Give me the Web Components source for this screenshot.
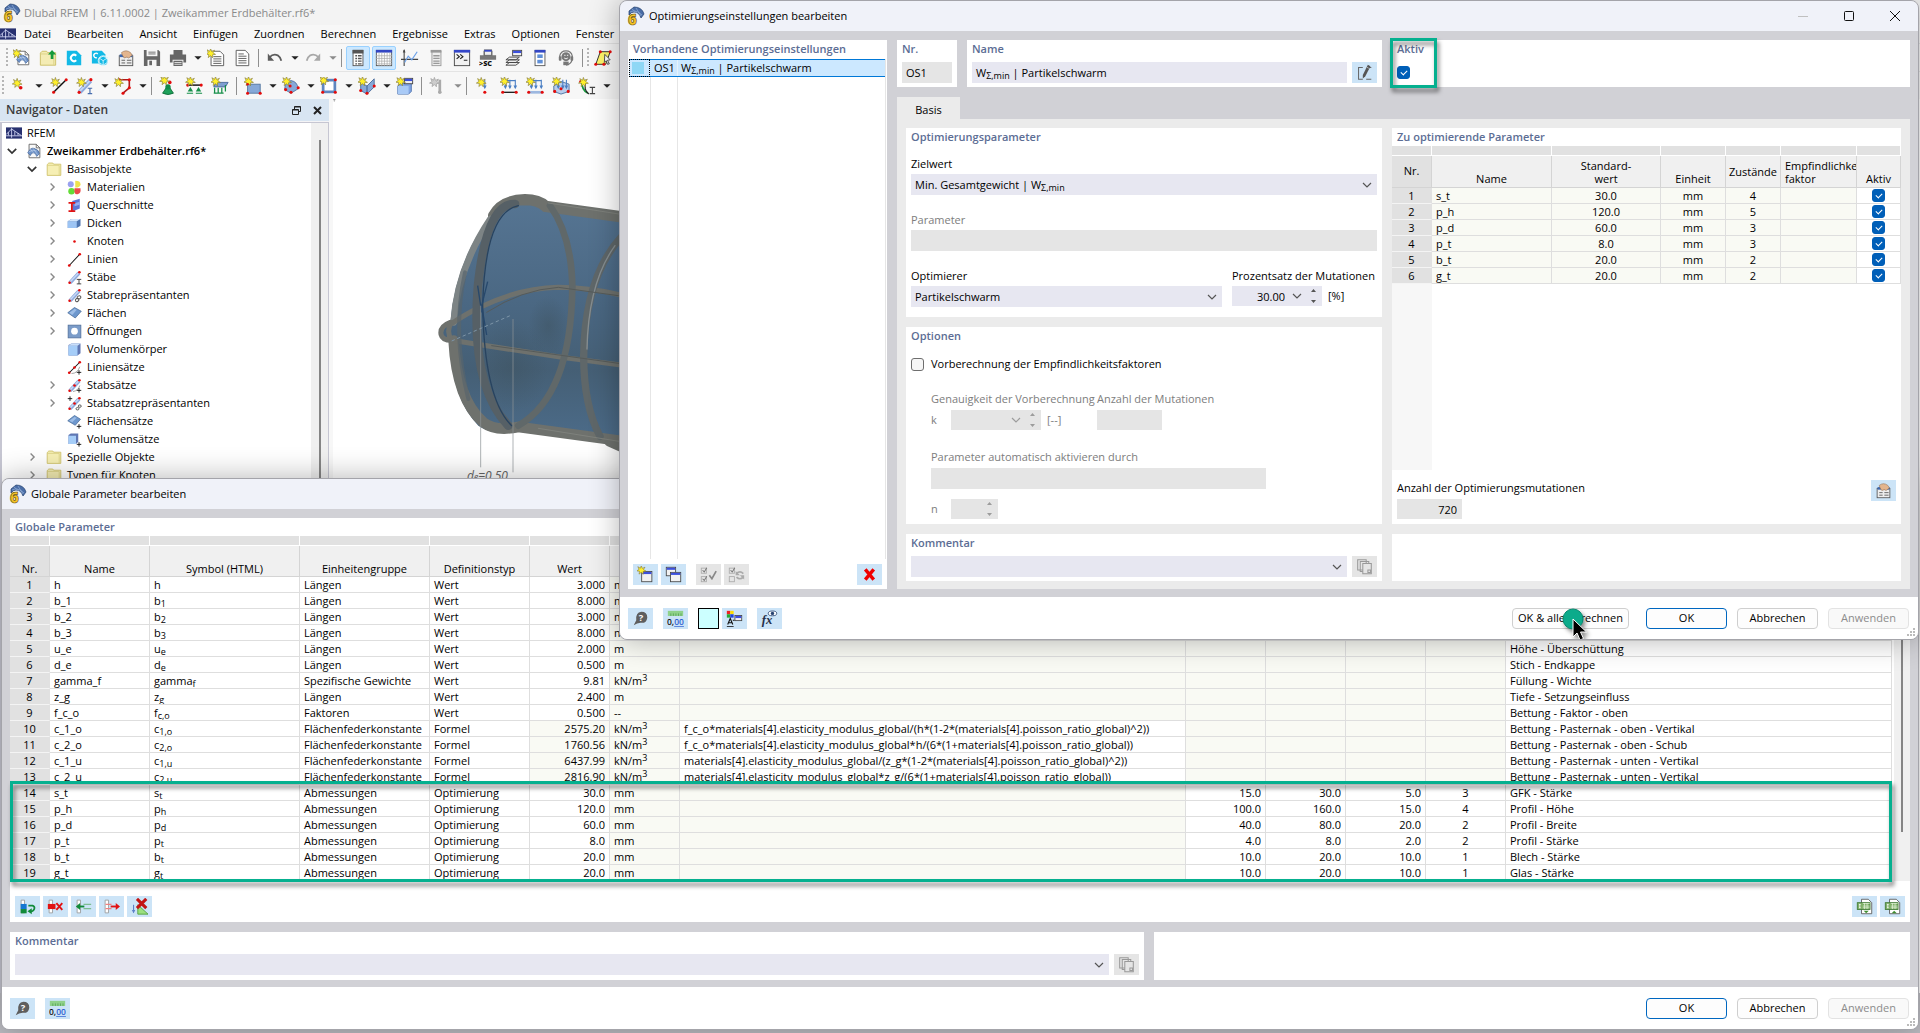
<!DOCTYPE html>
<html lang="de">
<head>
<meta charset="utf-8">
<title>Dlubal RFEM</title>
<style>
html,body{margin:0;height:100%;overflow:hidden}
body{font:11px/16px "Open Sans","Noto Sans",sans-serif;color:#000;background:#cfcfd6}
</style>
</head>
<body>
<rf-app></rf-app>
<script>
const STAR='M0-5.5 1.2-2.2 4.4-3.6 2.6-.8 5.5 1 2.2 1.4 2.2 4.8 0 2.4-2.6 4.6-2 1.2-5.4.8-2.6-1-4-4.2-1-2.4Z';
const star=(x,y)=>`<path transform="translate(${x} ${y})" d="${STAR}" fill="#fff02a" stroke="#857a3c" stroke-width=".7"/>`;
const dot=(x,y,r=1.7)=>`<circle cx="${x}" cy="${y}" r="${r}" fill="#e30b0b"/>`;
const line=(d,c='#222',w=1.4)=>`<path d="${d}" fill="none" stroke="${c}" stroke-width="${w}"/>`;
const shape=(d,f,s='none')=>`<path d="${d}" fill="${f}" stroke="${s}"/>`;
const plus=line('M13 16.5h6M16 13.5v6','#111',1.2);
const memberBar=line('M4 17 16 4','#8ea9dc',5)+line('M4 16 15.5 4','#c6d8f6',2)+dot(3.5,17,1.8)+dot(16.5,3,1.8);
const fold='<path d="M4.500 2.500h8l4 4v11h-12z" fill="#fff" stroke="#666"/><path d="M12.500 2.500v4h4" fill="none" stroke="#666"/>';
const mesh='<path d="M3 12q3-6 7-5 6 2 6 6l-3 3q-1-4-4-4-2 0-3 3z" fill="#6f93c8" stroke="#3d5f96" stroke-width=".7"/><path d="M6 8l5 6M4 11q5-3 9-1M9 7l5 7" stroke="#dce8f8" stroke-width=".5" fill="none"/>';
const folder='<path d="M1.500 4.500l2-2h5l1 1.500h9v14h-17z" fill="#f6efb4" stroke="#cbbd62"/><path d="M1.500 5.500h15v12" fill="none" stroke="#d9cf83"/>';
const win=(x,y,w,h)=>`<rect x="${x+.5}" y="${y+.5}" width="${w}" height="${h}" fill="#f1f1f1" stroke="#444"/><rect x="${x+1}" y="${y+1}" width="${w-1}" height="2.500" fill="#3c50dd"/>`;
const down=(x)=>line(`M${x} 3v9`,'#4a7fc4',1.2)+shape(`M${x-2} 9.500h4l-2 4z`,'#4a7fc4');
const rows=(x)=>`<path d="M2.500 2.500h4v15h-4z" fill="#fff" stroke="#999"/>`;
const xls='<path d="M6.500 1.500h8l4 4v13h-12z" fill="#fff" stroke="#555"/><rect x="1.500" y="5.500" width="15" height="8" fill="#7fb069" stroke="#3f7a34"/><path d="M3.500 7.500h2m-1 0v4m-1 0h2" stroke="#fff" fill="none"/><path d="M8 6.500h8M8 9.500h8M8 11.500h8M10 6v7M13 6v7" stroke="#e7f4df" stroke-width=".8" fill="none"/>';
const ICONS={
 logo:'<path d="M4 5 9 1q8 0 10 7l-3 4q-2-6-7-6-3 0-5 3z" fill="#4a6da7" stroke="#1f3d6d" stroke-width=".7"/><path d="M7 3l6 5M11 2l5 8M5 6q6-3 12 3" stroke="#9eb8df" stroke-width=".6" fill="none"/><text x="3" y="18.500" font-size="15" font-weight="800" fill="#f7c325" stroke="#6d5a17" stroke-width=".7" font-family="Open Sans">6</text>',
 rfem:'<rect x="0" y="3" width="20" height="14" fill="#27306f"/><path d="M0 13.500h20M7 4v12M0 12 7 5l12 8M3 9v4M11 8v5M15 10v3" fill="none" stroke="#dfe5ff" stroke-width="1"/>',
 file:fold.replace('#fff','#f9f9f9')+mesh, newmodel:'<g transform="translate(1)">'+fold+mesh+'</g>'+star(4,5),
 folder, open:folder.replaceAll('#f6efb4','#f4ecb4')+shape('M14.500 1 19 6h-3v5h-3V6h-3z','#159a3c'),
 cdoc:'<path d="M2 2h11l5 5v11H2z" fill="#13b9e6"/><path d="M12.500 12.500a3.500 3.500 0 1 1 0-5" fill="none" stroke="#fff" stroke-width="2.200"/>',
 cloud:'<path d="M1 2h11l4 4v10H1z" fill="#13b9e6"/><path d="M7.500 5.500a2.500 2.500 0 1 0-1 4" fill="none" stroke="#fff" stroke-width="1.500"/><circle cx="13.500" cy="13" r="5.500" fill="#13b9e6" stroke="#fff" stroke-width=".8"/><path d="M9 10l4.500-2L18 10v5l-4.500 3L9 15zM9 10l4.500 3 4.500-3M13.500 13v5" fill="none" stroke="#fff" stroke-width=".8"/>',
 hand:'<rect x="2.500" y="7.500" width="15" height="11" fill="#eee" stroke="#555"/><rect x="3" y="6" width="14" height="3" fill="#3b66b0"/><path d="M5 4q5-4 10 0l2 3-4 3-2-1-3 1-2-3z" fill="#e3b58e" stroke="#8b6547" stroke-width=".6"/><path d="M5 12.500h4M11 12.500h5M5 15.500h4M11 15.500h5" stroke="#555"/>',
 save:'<path d="M1 1h16l2 2v16H1z" fill="#666"/><rect x="4" y="1" width="12" height="7" fill="#f5f5f5"/><path d="M6 3.500h8M6 5.500h8" stroke="#666"/><rect x="5" y="12" width="10" height="7" fill="#f5f5f5"/><rect x="7" y="13" width="3" height="5" fill="#666"/>',
 print:'<path d="M5 1h10v5H5zM1 6h18v9h-3v-3H4v3H1zM5 13h10v6H5z" fill="#666"/><path d="M6 15h8M6 17h8" stroke="#f4f4f4" stroke-width=".9"/>',
 report:'<path d="M4.500 2.500h10l4 4v12h-14z" fill="#fff" stroke="#555"/><path d="M7 8.500h9M7 11h9M7 13.500h9M7 16h9" stroke="#555"/>'+star(4,5),
 page:'<path d="M3.500 1.500h10l4 4v13h-14z" fill="#fff" stroke="#555"/><path d="M6 5.500h6M6 8h9M6 10.500h9M6 13h9M6 15.500h9" stroke="#555"/>',
 undo:line('M4 9q4-4 9-2 3 2 4 6','#5c5c5c',2)+shape('M2 5v8h7z','#5c5c5c'),
 redo:line('M16 9q-4-4-9-2-3 2-4 6','#a8a8a8',2)+shape('M18 5v8h-7z','#a8a8a8'),
 nav:'<rect x="4.500" y="1.500" width="11" height="17" fill="#fff" stroke="#555"/><rect x="4" y="1" width="12" height="4" fill="#555"/><path d="M7 7.500h2m1 0h4M7 10.500h2m1 0h4M7 13.500h2m1 0h4M7 16.500h2m1 0h4" stroke="#555" stroke-width="1.500"/>',
 grid:'<rect x="1.500" y="1.500" width="17" height="17" fill="#fff" stroke="#555"/><rect x="1" y="1" width="18" height="3" fill="#3346c4"/><path d="M1 7.500h18M1 10.500h18M1 13.500h18M1 16.500h18M4.500 4v15M7.500 4v15M10.500 4v15M13.500 4v15M16.500 4v15" stroke="#aaa" stroke-width=".8"/>',
 graph:line('M3.500 1v18M0 11.500h19','#444',1.2)+line('M4 15 8 8l4 4 6-9','#6ba0e8',1.3)+shape('M2 4l1.500-4L5 4z','#444'),
 list2:'<rect x="5.500" y="2.500" width="10" height="16" fill="#eee" stroke="#999"/><rect x="4" y="1" width="12" height="3" fill="#999"/><path d="M7 7.500h7M7 10.500h7M7 13.500h7M7 16h7" stroke="#999" stroke-width="1.400"/>',
 console:'<rect x="1.500" y="1.500" width="17" height="17" fill="#f2f2f2" stroke="#444"/><rect x="1" y="1" width="18" height="3" fill="#3446c8"/><path d="M4 6l3 2.500L4 11M8 6l3 2.500L8 11M12 12.500h4" fill="none" stroke="#222" stroke-width="1.300"/>',
 sc:'<path d="M5 2h10v5h4v5H1V7h4z" fill="#777"/><rect x="6" y="1" width="8" height="6" fill="#eee" stroke="#666"/><rect x="6" y="1" width="8" height="2" fill="#3446c8"/><text x="0" y="19" font-size="8" font-weight="800" font-family="Open Sans" fill="#111">&gt;SC</text>',
 layers:win(8,1,10,6)+'<path d="M1 12l4-3h11l-4 3z M1 15l4-3h11l-4 3zM1 18l4-3h11l-4 3z" fill="#eee" stroke="#444"/>',
 blocks:'<rect x="4.500" y="1.500" width="11" height="17" fill="#fff" stroke="#555"/><rect x="4" y="1" width="12" height="3" fill="#3346c4"/><rect x="7" y="6" width="6" height="4" fill="#5f8fd8"/><rect x="7" y="12" width="6" height="4" fill="#5f8fd8"/>',
 head:'<circle cx="10" cy="8.500" r="5" fill="#777"/><path d="M3 11V8q1-6 7-6t7 6v3q-1 6-7 7" fill="none" stroke="#777" stroke-width="1.300"/><rect x="2" y="8" width="3" height="5" rx="1" fill="#777"/><rect x="15" y="8" width="3" height="5" rx="1" fill="#777"/><path d="M8 7h1.500M11 7h1.500M8 10q2 2 4 0" stroke="#fff" fill="none"/><path d="M7 14h6v4H7z" fill="#777"/>',
 plane:'<path d="M7 3h11l-5 14H2z" fill="#fff56a" stroke="#222"/>'+dot(7,3)+dot(18,3)+dot(2,17)+dot(11,17)+shape('M12 6l6 6-3 .5 2 4-2 .5-1.500-4-2 2z','#fff','#444'),
 nstar:star(9,7)+dot(13,12,2), lnew:line('M4 17 18 3','#111',1.6)+dot(4,17)+dot(18,3)+star(6,6),
 mnew:memberBar+line('M13 12.500h5M15.500 12.500v6M13 18.500h5','#4a6fae',1.3)+star(6,6),
 poly:line('M6 3h11v9l-7 6','#b01818',1.8)+dot(6,3)+dot(17,3)+dot(17,12)+dot(10,18)+star(5,6),
 support:shape('M10 9l6 9q-6 3-12 0z','#1fa15a','#0c6b37')+'<circle cx="10" cy="11" r="3" fill="#128a48"/>'+dot(12,6,2)+star(6,4),
 msupport:line('M3 9h15','#111',1.6)+dot(3,9)+dot(18,9)+shape('M6 11l3 5H3zM15 11l3 5h-6z','#158f48')+line('M2 18h7M12 18h7','#158f48',1.2)+star(6,5),
 ssupport:shape('M6 6h13l-3 5H3z','#7f9fd0','#47689c')+line('M4 12v6M8 12v6M12 12v6M16 9v7M3 18h11','#158f48',1.4)+star(5,5),
 rect:'<rect x="4" y="8" width="14" height="10" fill="#86a8d8" stroke="#54759f"/>'+dot(4,18)+dot(18,18)+star(5,5)+dot(4,8,1.4),
 quad:'<path d="M3 14Q3 5 10 4q7 1 8 9l-8 5z" fill="#86a8d8" stroke="#54759f"/>'+dot(18,12)+dot(10,17)+dot(4,14)+dot(9,10)+star(5,5),
 opening:'<rect x="3.500" y="3.500" width="13" height="13" fill="#fff" stroke="#5f86c0" stroke-width="3"/>'+dot(3,3)+dot(17,3)+dot(3,17)+dot(17,17)+star(4,4),
 book:shape('M3 6l7 4 8-8v9l-8 8-7-4z','#86a8d8','#4b6c9c')+line('M10 10v9','#4b6c9c')+dot(10,18)+dot(18,10)+dot(3,15)+star(5,5),
 solid:shape('M2 10l3-3h12v9l-3 3H2z','#82a7e6','#4c6faa')+shape('M2 10h12v9H2z','#a9caf6')+win(9,1,9,6)+star(5,5),
 gray:line('M12 3v14','#aaa',3)+'<circle cx="12" cy="17" r="2" fill="#aaa"/><path transform="translate(6 6)" d="'+STAR+'" fill="#ccc" stroke="#aaa"/>',
 load1:down(12)+dot(12,17)+star(8,6), load2:down(6)+down(11)+down(17)+line('M5 4h12','#4a7fc4')+line('M3 17h15','#111')+dot(3,17)+dot(18,17)+star(5,5),
 load3:down(6)+down(11)+down(17)+line('M5 4h12','#4a7fc4')+line('M3 17h15','#9db8e0',3)+dot(3,17)+dot(18,17)+star(5,5),
 load4:shape('M2 10l8-5 9 3v8l-9 3-8-3z','#b8cdec','#4a6f9f')+down(7)+down(12)+down(16)+dot(3,16)+dot(10,13)+dot(18,16)+star(5,5),
 mem2:line('M4 4q0 11 7 14','#159a3c',2)+line('M8 3v10q1 4 4 6','#222',1.3)+line('M13 11.500h6M16 11.500v7M13 18.500h6','#444',1.2)+dot(3,5)+star(6,6),
 mat:'<circle cx="5" cy="5.500" r="4" fill="#99a1ef"/><path d="M11 1q7 0 7 4.500T11 10z" fill="#eee24c"/><circle cx="6" cy="15" r="4.300" fill="#63dc36"/><path d="M10 11h8q1 7-4 8t-4-8z" fill="#ec4a4a"/>',
 section:shape('M7 4l10-3v13L7 18z','#5d76d6')+shape('M10 7l7-2v4l-7 2z','#98aef2')+line('M2 6.500h9M6.500 6v11M2 17.500h9','#e01414',2.4),
 thick:shape('M1 7l5-3h12v9l-5 3H1z','#4e75b0')+shape('M1 7h12v9H1z','#9cc4f4')+shape('M1 7l5-3h12l-5 3z','#d0e4fb'),
 node:dot(10,10,1.7), line:line('M3 18 17 3','#111',1.4)+dot(3,18,1.8)+dot(17,3,1.8),
 member:memberBar+line('M13 12.500h6M16 12.500v6M13 18.500h6','#333',1.2),
 memrep:memberBar+'<g fill="none" stroke="#555" stroke-width="1.300"><ellipse cx="16" cy="12.500" rx="2.500" ry="2" transform="rotate(-35 16 12.500)"/><ellipse cx="13.500" cy="16" rx="2.500" ry="2" transform="rotate(-35 13.500 16)"/></g>',
 surface:shape('M1 9l9-7 9 5-8 9z','#6d97cd','#4a6c9a')+shape('M3 9l7-5 3 1-6 7z','#9dbde6'),
 hole:'<rect x="1.500" y="1.500" width="17" height="17" fill="#7b9cc9" stroke="#4e6d98"/><circle cx="10" cy="9.500" r="4.500" fill="#fff"/>',
 cube:shape('M2 4l4-2h12v13l-4 3H2z','#6078b4')+shape('M2 5h12v13H2z','#a5cdf8')+shape('M2 5l4-3h12l-4 3z','#c9e0fb'),
 lineset:line('M3 17 17 3','#111',1.4)+line('M6 18q8 0 11-9','#888',1)+dot(3,17,1.8)+dot(10,10,1.8)+dot(17,3,1.8)+plus,
 memset:memberBar+line('M8 18q7-1 9-8','#888',1)+dot(10,10,1.800)+plus,
 memsetrep:memberBar+line('M1 3.500h6M4 .5v6','#111',1.2)+dot(10,10,1.8)+'<g fill="none" stroke="#555" stroke-width="1.300"><ellipse cx="17" cy="13.500" rx="2" ry="1.600"/><ellipse cx="14" cy="17" rx="2" ry="1.600"/></g>',
 surfset:shape('M1 9l9-7 8 5-7 8z','#6d97cd','#4a6c9a')+shape('M3 9l7-5 3 1-6 6z','#9dbde6')+plus,
 cubeset:shape('M2 4l3-2h10v11l-3 3H2z','#6078b4')+shape('M2 5h10v11H2z','#a5cdf8')+plus,
 chev:line('M5 7.500l5 5 5-5','#555',1.5), chevR:line('M8 5l5 5-5 5','#8a8a8a',2), chevD:line('M4 7l6 6 6-6','#333',2.4),
 caret:shape('M4 7h12l-6 6z','#222'),
 newwin:win(5,6,12,12)+star(5,5), copywin:win(1,1,11,10)+win(6,7,12,11),
 checks:'<rect x="1.500" y="2.500" width="6" height="6" fill="none" stroke="#aaa"/><rect x="1.500" y="12.500" width="6" height="6" fill="none" stroke="#aaa"/>'+line('M3 5l2 2 3-5M3 15l2 2 3-5','#777',1.2)+line('M11 11l3 4 5-9','#888',2),
 swap:'<rect x="1.500" y="2.500" width="6" height="6" fill="none" stroke="#aaa"/><rect x="1.500" y="12.500" width="6" height="6" fill="none" stroke="#aaa"/>'+line('M3 5l2 2 3-5','#777',1.2)+line('M10 9q4-4 8 0M18 13q-4 4-8 0','#aaa',2)+shape('M9 6v5h5zM19 16v-5h-5z','#aaa'),
 redx:line('M5 4l10 12M15 4 5 16','#f00000',4),
 edit:line('M8 4H3v14h5M12 18h6M15 4h3','#666',1.2)+shape('M14 1l3 1.500-6 12-3 2.500 0-4z','#555')+line('M13 4l2 1','#eee',.8),
 help:'<path d="M2 18l3-6q-1-9 6-10 7 0 7 7-1 7-8 6-4 0-8 3z" fill="#5e5e5e"/><text x="8" y="13" font-size="11" font-weight="700" fill="#fff" font-family="Open Sans">?</text>',
 units:'<rect x="1" y="1" width="18" height="6" fill="#8fd18a"/><path d="M4.500 4v3M7.500 4v3M10.500 4v3M13.500 4v3M16.500 4v3" stroke="#3f8f42" stroke-width=".7"/><text x="0" y="18" font-size="10" font-weight="600" font-family="Open Sans" fill="#111">0,<tspan fill="#2f5fd0" text-decoration="underline">00</tspan></text>',
 disp:'<rect x="1" y="1" width="4" height="4" fill="#e22"/><rect x="5" y="1" width="4" height="4" fill="#fd0"/><rect x="1" y="5" width="4" height="4" fill="#2a3"/><rect x="5" y="5" width="4" height="4" fill="#24d"/>'+win(10,6,8,6)+line('M2 17l3-7 3 7M3.500 15h3M8 12h2','#111',1.3)+line('M1 19.500h8','#111',1),
 fx:'<text x="1" y="16" font-size="15" font-style="italic" font-weight="700" font-family="Liberation Serif" fill="#25304a">fx</text><ellipse cx="13.500" cy="4" rx="5" ry="2.800" fill="#fff" stroke="#25406f"/><circle cx="13.500" cy="4" r="2" fill="#25406f"/>',
 pages:'<g fill="#e5e5e5" stroke="#999" stroke-width="1.200"><path d="M2 2h10v12H2zM5 4h10v12H5z"/><path d="M8 6.500h10v12H8z"/><path d="M14 14h3v3h-3z"/></g>',
 r1:rows()+'<rect x="2" y="7" width="7" height="6" fill="#1677d2"/><rect x="2" y="13" width="7" height="5" fill="#118a3a"/>'+line('M11 9h5q3 1 2 4t-5 3','#118a3a',2)+shape('M15 12v7l-5-3.500z','#118a3a'),
 r2:rows()+'<rect x="1" y="7" width="9" height="6" fill="#e21313"/>'+line('M11 6l7 8M18 6l-7 8','#e21313',2.2),
 r3:rows()+line('M3 10h8','#118a3a',2.2)+shape('M1 10l5-4v8z','#118a3a')+line('M10 7.500h9M10 12.500h9','#7dbd91',1.2),
 r4:rows()+line('M3 7.500h7M3 12.500h7','#f08080',1.2)+line('M9 10h7','#e21313',2.2)+shape('M20 10l-5-4v8z','#e21313'),
 r5:shape('M8 8l12 11H8z','#9be07f','#4e9d3a')+line('M3 8v9','#5b80c8',1.3)+shape('M1 14h4l-2 4z','#5b80c8')+line('M7 1l11 11M18 1 7 12','#c21414',3.6),
 xls1:xls+shape('M9 15h6l-3 3z','#3f8f32'), xls2:xls+shape('M9 18h6l-3-3z','#3f8f32')
};
const svg=(n,s=20)=>`<svg viewBox="0 0 20 20" width="${s}" height="${s}" aria-hidden="true">${ICONS[n]||''}</svg>`;

function define(name,css,html,extra){
  customElements.define(name,class extends HTMLElement{
    constructor(){super();this.attachShadow({mode:'open'});}
    connectedCallback(){
      const t=document.createElement('template');
      t.innerHTML=`<style>*{box-sizing:border-box}svg{display:block;flex:none}${css}</style>`+(typeof html==='function'?html(this):html);
      this.shadowRoot.replaceChildren(t.content.cloneNode(true));
      if(extra)extra(this);
    }
  });
}
const rich='W<sub>Σ,min</sub>';
const SUB='sub,sup{font-size:9px;line-height:0;vertical-align:-2px}sup{vertical-align:4px}';

define('rf-icon',':host{display:block;flex:none}',h=>svg(h.getAttribute('name'),+(h.getAttribute('size')||16)));

define('rf-tool',`:host{display:block;flex:none}
button{width:25px;height:21px;border:0;padding:0;background:#cce4f7;display:flex;align-items:center;justify-content:center}
button:disabled{background:#e5e5e5}`,
h=>`<button type="button" aria-label="${h.getAttribute('label')||h.getAttribute('name')}" ${h.hasAttribute('disabled')?'disabled':''}>${svg(h.getAttribute('name'),17)}</button>`);

define('rf-button',`:host{display:block;flex:none}
button{font:inherit;color:#000;height:21px;width:81px;padding:0;border:1px solid #cfcfcf;border-radius:4px;background:#fdfdfd;white-space:nowrap}
:host([primary]) button{border-color:#0067c0}
:host([wide]) button{width:117px}
button:disabled{color:#8c8c8c;background:#f9f9f9;border-color:#e3e3e3}`,
h=>`<button type="button" ${h.hasAttribute('disabled')?'disabled':''}><slot></slot></button>`);

define('rf-panel',`:host{display:flex;flex-direction:column;background:#fff;min-width:0}
h2{margin:0;font-size:11px;font-weight:600;line-height:18px;height:18px;padding:0 5px;color:#5c6d94;white-space:nowrap}`,
h=>`<h2>${h.getAttribute('heading')||''}</h2><slot></slot>`);

define('rf-window',`:host{display:flex;flex-direction:column;background:#d1d1d6;border:1px solid #a4a4aa;border-radius:8px;overflow:hidden;box-shadow:0 0 30px rgba(0,0,0,.3)}
header{display:flex;align-items:center;flex:none;height:30px;padding-left:5px;background:#f0f2f9;gap:4px}
h1{font-size:11px;font-weight:400;margin:0;flex:1}
.ctl{display:flex}.ctl button{width:46px;height:28px;border:0;background:none;padding:0;display:grid;place-items:center}
.body{flex:1;display:flex;flex-direction:column;min-height:0;padding:9px 8px 8px}
footer{flex:none;height:42px;background:#fff;display:flex;align-items:center;gap:10px;padding:0 9px 0 8px}
.grip{position:absolute;right:2px;bottom:2px}`,
h=>`<header>${svg('logo',20)}<h1>${h.getAttribute('caption')}</h1>${h.hasAttribute('controls')?`<div class="ctl">
<button type="button" aria-label="Minimieren"><svg width="10" height="10"><path d="M0 5.500h10" stroke="#c0c0c0"/></svg></button>
<button type="button" aria-label="Maximieren"><svg width="10" height="10"><rect x=".5" y=".5" width="9" height="9" rx="1" fill="none" stroke="#111"/></svg></button>
<button type="button" aria-label="Schließen"><svg width="10" height="10"><path d="M0 0l10 10M10 0 0 10" stroke="#111"/></svg></button></div>`:''}</header>
<div class="body"><slot></slot></div><footer><slot name="footer"></slot></footer>
<svg class="grip" width="9" height="9" fill="#bbb"><path d="M6 0h2v2H6zM6 3h2v2H6zM3 3h2v2H3zM6 6h2v2H6zM3 6h2v2H3zM0 6h2v2H0z"/></svg>`);

/* labelled field: kind = select | text | spin */
define('rf-field',`:host{display:flex;flex-direction:column;gap:2px;min-width:0}
label{line-height:16px;white-space:nowrap}:host([disabled]) label,:host([disabled]) .unit{color:#7d7d7d}
:host([inline]){flex-direction:row;align-items:center;gap:0}:host([inline]) label{width:20px}
.row{display:flex;align-items:center;gap:6px}
.box{position:relative;flex:1;height:21px;background:#e7e7f1;display:flex;align-items:center;min-width:0}
:host([disabled]) .box,:host([readonly]) .box{background:#e5e5e5}
input,select{appearance:none;font:inherit;color:inherit;border:0;margin:0;background:none;width:100%;height:100%;padding:0 8px 0 4px;outline:0}
:host([small]) .box{flex:none;width:var(--w,90px);height:20px}
:host([spin]) input{text-align:right;padding-right:4px}
.rich{position:absolute;left:4px;pointer-events:none;white-space:nowrap}
.chev{position:absolute;right:2px;pointer-events:none}
:host([spin]) .box .chev{position:static;margin-right:1px}
:host([disabled]) svg{opacity:.5}
.ud{margin:0 5px 0 4px}${SUB}`,
h=>{
 const lab=h.getAttribute('label'),v=h.getAttribute('value')||'',dis=h.hasAttribute('disabled')?'disabled':'',ro=h.hasAttribute('readonly')?'readonly':'';
 const sel=h.hasAttribute('select'),aria=lab?'':`aria-label="${h.getAttribute('name')||'Wert'}"`;
 const r=h.hasAttribute('rich')?`<span class="rich">${h.getAttribute('rich').replace('{W}',rich)}</span>`:'';
 const ctl=sel?`<select id="c" ${aria} ${dis}><option>${v}</option></select>`:`<input id="c" type="text" ${aria} value="${v}" ${dis} ${ro}>`;
 const ch=h.hasAttribute('chev')||(sel&&!h.hasAttribute('nochev'))?`<span class="chev">${svg('chev',16)}</span>`:'';
 const ud=h.hasAttribute('spin')?`<svg class="ud" width="7" height="16" fill="#555"><path d="M1 4h5L3.500 1zM1 12h5l-2.500 3z"/></svg>`:'';
 return `${lab?`<label for="c">${lab}</label>`:''}<div class="row" style="${h.hasAttribute('inline')?'':'width:100%'}"><div class="box">${ctl}${r}${ch}${ud}</div>${h.hasAttribute('unit')?`<span class="unit">${h.getAttribute('unit')}</span>`:''}</div>`;
});

const CHECK=`input[type=checkbox]{appearance:none;flex:none;margin:0;width:13px;height:13px;border:1px solid #6e6e6e;border-radius:3px;background:#f6f6f6;display:block;position:relative}
input[type=checkbox]:checked{background:#005fb8;border-color:#005fb8}
input[type=checkbox]:checked::before{content:"";position:absolute;left:3px;top:3px;width:5px;height:3px;border-left:1px solid #fff;border-bottom:1px solid #fff;transform:rotate(-45deg)}`;
define('rf-check',`:host{display:block}label{display:flex;align-items:center;gap:7px;line-height:18px}${CHECK}`,
h=>`<label><input type="checkbox" ${h.hasAttribute('checked')?'checked':''} aria-label="${h.getAttribute('name')||h.textContent}"><slot></slot></label>`);

const TABLE=`table{border-collapse:separate;border-spacing:0;table-layout:fixed;width:100%;white-space:nowrap}
th{font-weight:400}
.strip th{height:10px;padding:0;background:#e1e1e1;border-right:1px solid #fff;border-bottom:1px solid #fff;font-size:0;line-height:0}
.head th{height:31px;padding:0 4px 1px;background:#f0f0f0;border-right:1px solid #d4d4d4;border-bottom:1px solid #d4d4d4;vertical-align:bottom;line-height:13px;overflow:hidden}
.head th:first-child{background:#e1e1e1}
td,tbody th{height:16px;line-height:15px;padding:0 4px;border-right:1px solid #dedede;border-bottom:1px solid #dedede;overflow:hidden;background:#fff}
tbody th{background:#e1e1e1;border-color:#e1e1e1;border-bottom-color:#f4f4f4;text-align:center}
.ro{background:#f9faf4}.r{text-align:right}.c{text-align:center}`;

const L='Längen',G=[
['h','h',L,'Wert','3.000','m','','','','','',''],
['b_1','b<sub>1</sub>',L,'Wert','8.000','m','','','','','',''],
['b_2','b<sub>2</sub>',L,'Wert','3.000','m','','','','','',''],
['b_3','b<sub>3</sub>',L,'Wert','8.000','m','','','','','',''],
['u_e','u<sub>e</sub>',L,'Wert','2.000','m','','','','','','Höhe - Überschüttung'],
['d_e','d<sub>e</sub>',L,'Wert','0.500','m','','','','','','Stich - Endkappe'],
['gamma_f','gamma<sub>f</sub>','Spezifische Gewichte','Wert','9.81','kN/m<sup>3</sup>','','','','','','Füllung - Wichte'],
['z_g','z<sub>g</sub>',L,'Wert','2.400','m','','','','','','Tiefe - Setzungseinfluss'],
['f_c_o','f<sub>c,o</sub>','Faktoren','Wert','0.500','--','','','','','','Bettung - Faktor - oben'],
['c_1_o','c<sub>1,o</sub>','Flächenfederkonstante','Formel','2575.20','kN/m<sup>3</sup>','f_c_o*materials[4].elasticity_modulus_global/(h*(1-2*(materials[4].poisson_ratio_global)^2))','','','','','Bettung - Pasternak - oben - Vertikal'],
['c_2_o','c<sub>2,o</sub>','Flächenfederkonstante','Formel','1760.56','kN/m<sup>3</sup>','f_c_o*materials[4].elasticity_modulus_global*h/(6*(1+materials[4].poisson_ratio_global))','','','','','Bettung - Pasternak - oben - Schub'],
['c_1_u','c<sub>1,u</sub>','Flächenfederkonstante','Formel','6437.99','kN/m<sup>3</sup>','materials[4].elasticity_modulus_global/(z_g*(1-2*(materials[4].poisson_ratio_global)^2))','','','','','Bettung - Pasternak - unten - Vertikal'],
['c_2_u','c<sub>2,u</sub>','Flächenfederkonstante','Formel','2816.90','kN/m<sup>3</sup>','materials[4].elasticity_modulus_global*z_g/(6*(1+materials[4].poisson_ratio_global))','','','','','Bettung - Pasternak - unten - Vertikal'],
['s_t','s<sub>t</sub>','Abmessungen','Optimierung','30.0','mm','','15.0','30.0','5.0','3','GFK - Stärke'],
['p_h','p<sub>h</sub>','Abmessungen','Optimierung','120.0','mm','','100.0','160.0','15.0','4','Profil - Höhe'],
['p_d','p<sub>d</sub>','Abmessungen','Optimierung','60.0','mm','','40.0','80.0','20.0','2','Profil - Breite'],
['p_t','p<sub>t</sub>','Abmessungen','Optimierung','8.0','mm','','4.0','8.0','2.0','2','Profil - Stärke'],
['b_t','b<sub>t</sub>','Abmessungen','Optimierung','20.0','mm','','10.0','20.0','10.0','1','Blech - Stärke'],
['g_t','g<sub>t</sub>','Abmessungen','Optimierung','20.0','mm','','10.0','20.0','10.0','1','Glas - Stärke']];
const cls=(r,i)=>{const c=[];
 if(i===4||i>=7&&i<=9)c.push('r'); if(i===10)c.push('c');
 if(i===5||i===6&&r[3]!=='Formel'||i>=7&&i<=10&&r[3]!=='Optimierung'||i===4&&r[3]==='Formel')c.push('ro');
 return c.join(' ');};
const HEAD=['Nr.','Name','Symbol (HTML)','Einheitengruppe','Definitionstyp','Wert','','','','','','',''];
define('rf-global-table',`:host{display:flex;flex:1;min-height:0;position:relative}
.wrap{flex:1;min-width:0;overflow:hidden}${TABLE}${SUB}
.bar{width:18px;flex:none;background:#f0f0f0;border-left:2px solid #fff;display:flex;justify-content:center}
.bar i{width:2px;margin:90px 0 49px;background:#858585}
.mark{position:absolute;left:0;right:18px;bottom:-1px;height:101px;border:3px solid #05b08f;filter:drop-shadow(2px 4px 2px rgba(0,0,0,.5));pointer-events:none}`,
()=>`<div class="wrap"><table><colgroup>${[40,100,150,130,100,80,70,506,80,80,80,80].map(w=>`<col style="width:${w}px">`).join('')}<col></colgroup>
<thead><tr class="strip">${'<th></th>'.repeat(13)}</tr><tr class="head">${HEAD.map(t=>`<th>${t}</th>`).join('')}</tr></thead>
<tbody>${G.map((r,n)=>`<tr><th>${n+1}</th>${r.map((c,i)=>`<td class="${cls(r,i)}">${c}</td>`).join('')}</tr>`).join('')}</tbody></table></div>
<div class="bar"><i></i></div><div class="mark"></div>`);

const P=[['s_t','30.0','4'],['p_h','120.0','5'],['p_d','60.0','3'],['p_t','8.0','3'],['b_t','20.0','2'],['g_t','20.0','2']];
define('rf-param-table',`:host{display:block;flex:1;background:linear-gradient(to right,#f7f7f7 40px,#fff 40px)}
${TABLE}${CHECK}.head th{height:32px;padding-bottom:2px}.head .m{vertical-align:middle}.head .z{padding:0}td.k{padding:0}td.k input{margin:1px auto}`,
()=>`<table><colgroup>${[40,120,109,65,55,76].map(w=>`<col style="width:${w}px">`).join('')}<col></colgroup>
<thead><tr class="strip">${'<th></th>'.repeat(7)}</tr><tr class="head"><th class="m">Nr.</th><th>Name</th><th>Standard-<br>wert</th><th>Einheit</th><th class="m z">Zustände</th><th style="text-align:left">Empfindlichke<br>faktor</th><th>Aktiv</th></tr></thead>
<tbody>${P.map((p,i)=>`<tr><th>${i+1}</th><td class="ro">${p[0]}</td><td class="ro c">${p[1]}</td><td class="ro c">mm</td><td class="ro c">${p[2]}</td><td class="ro"></td><td class="k"><input type="checkbox" checked aria-label="${p[0]} aktiv"></td></tr>`).join('')}</tbody></table>`);

define('rf-settings-list',`:host{display:flex;flex-direction:column;flex:1}
.list{flex:1;margin:1px 1px 5px;display:flex;flex-direction:column;background:linear-gradient(#e6e6e6,#e6e6e6) 21px 0/1px 100% no-repeat,linear-gradient(#e6e6e6,#e6e6e6) 48px 0/1px 100% no-repeat;border-right:1px solid #e6e6e6}
.item{display:flex;height:18px;background:#cce8ff;border:1px solid #0078d7;border-width:1px 0;align-items:center}
.sw{width:21px;height:18px;border:1px dotted #000;margin:-1px 0;padding:2px}.sw i{display:block;width:12px;height:12px;background:#8ed7f5}
.no{width:28px;padding-left:4px;border-right:1px solid #e6f2fb}.nm{padding-left:3px}
.tools{display:flex;gap:3px;padding:0 5px 4px}.tools .s{margin-left:7px}.tools .e{margin-left:auto}${SUB}`,
`<div class="list"><div class="item"><span class="sw"><i></i></span><span class="no">OS1</span><span class="nm">${rich} | Partikelschwarm</span></div></div>
<div class="tools"><rf-tool name="newwin"></rf-tool><rf-tool name="copywin"></rf-tool><rf-tool class="s" name="checks" disabled></rf-tool><rf-tool name="swap" disabled></rf-tool><rf-tool class="e" name="redx"></rf-tool></div>`);

define('rf-comment',`:host{display:flex;gap:5px;padding:4px 5px 5px}rf-field{flex:1}`,
`<rf-field select name="Kommentar"></rf-field><rf-tool name="pages" disabled></rf-tool>`);

define('rf-optimizer',`:host{display:flex;flex:none;gap:10px}
.left{width:259px;flex:none}.right{flex:1;min-width:0;display:flex;flex-direction:column}
.top{display:grid;grid-template-columns:60px minmax(0,415fr) minmax(0,518fr);gap:10px;height:47px;margin-bottom:10px}
.in{padding:4px 5px 0;display:flex;gap:5px}.in rf-field{flex:1}
.aktiv{padding:8px 5px}.mk{position:relative}
.mk::after{content:"";box-sizing:border-box;position:absolute;left:-2px;top:-2px;width:47px;height:50px;border:3px solid #05b08f;filter:drop-shadow(2px 4px 2px rgba(0,0,0,.5));pointer-events:none}
.tab{align-self:flex-start;border:0;font:inherit;background:#ebebeb;height:22px;width:63px;padding:3px 0 0;flex:none}
.content{flex:1;background:#ebebeb;padding:9px 9px 8px;display:grid;grid-template-columns:minmax(0,476fr) minmax(0,509fr);gap:10px}
.col{display:flex;flex-direction:column;gap:10px}
.params{display:flex;flex-direction:column;gap:17px;padding:10px 5px}
.two{display:flex;gap:10px}.two>:first-child{flex:1}.two>:last-child{width:145px}
.opt{padding:10px 5px 5px}.sub{padding:18px 0 0 20px;color:#7d7d7d}
.lab{display:grid;grid-template-columns:166px 1fr;align-items:end}.gap{margin-top:19px;width:75%;gap:3px}
.n{--w:47px;margin-top:10px}
.lab p{margin:0 0 3px;line-height:16px;grid-column:1;white-space:nowrap}.lab p+p{grid-column:2}
.grow{flex:1}.cnt{display:flex;justify-content:space-between;padding:10px 5px 5px}.cnt rf-field{--w:65px;gap:3px}
.low{height:47px}`,
`<rf-panel class="left" heading="Vorhandene Optimierungseinstellungen"><rf-settings-list></rf-settings-list></rf-panel>
<div class="right"><div class="top">
<rf-panel heading="Nr."><div class="in"><rf-field readonly name="Nr." value="OS1"></rf-field></div></rf-panel>
<rf-panel heading="Name"><div class="in"><rf-field name="Name" rich="{W} | Partikelschwarm"></rf-field><rf-tool name="edit"></rf-tool></div></rf-panel>
<rf-panel class="mk" heading="Aktiv"><div class="aktiv"><rf-check checked name="Aktiv"></rf-check></div></rf-panel></div>
<button type="button" class="tab">Basis</button>
<div class="content"><div class="col">
<rf-panel heading="Optimierungsparameter"><div class="params">
<rf-field select label="Zielwert" rich="Min. Gesamtgewicht | {W}"></rf-field>
<rf-field disabled label="Parameter"></rf-field>
<div class="two"><rf-field select label="Optimierer" value="Partikelschwarm"></rf-field><rf-field small spin chev label="Prozentsatz der Mutationen" value="30.00" unit="[%]"></rf-field></div>
</div></rf-panel>
<rf-panel heading="Optionen"><div class="opt"><rf-check>Vorberechnung der Empfindlichkeitsfaktoren</rf-check>
<div class="sub"><div class="lab"><p>Genauigkeit der Vorberechnung</p><p>Anzahl der Mutationen</p>
<rf-field small spin chev inline disabled label="k" unit="[--]"></rf-field><rf-field small disabled name="Anzahl der Mutationen" style="--w:65px"></rf-field></div>
<rf-field class="gap" disabled label="Parameter automatisch aktivieren durch"></rf-field>
<rf-field class="n" small spin inline disabled label="n"></rf-field></div></div></rf-panel>
<rf-panel class="low" heading="Kommentar"><rf-comment></rf-comment></rf-panel></div>
<div class="col"><rf-panel class="grow" heading="Zu optimierende Parameter"><rf-param-table></rf-param-table>
<div class="cnt"><rf-field small readonly spin-less label="Anzahl der Optimierungsmutationen" value="720"></rf-field><rf-tool name="hand"></rf-tool></div></rf-panel>
<rf-panel class="low"></rf-panel></div></div></div>`,
h=>{const f=h.shadowRoot.querySelector('[spin-less]').shadowRoot.querySelector('input');f.style.textAlign='right';f.style.paddingRight='5px';});

define('rf-menubar',`:host{display:flex;align-items:center;gap:16px;height:18px;background:#f7f7f7;flex:none}
button{border:0;background:none;font:inherit;padding:0;margin:0}svg{margin-right:-8px}`,
svg('rfem',16)+['Datei','Bearbeiten','Ansicht','Einfügen','Zuordnen','Berechnen','Ergebnisse','Extras','Optionen','Fenster'].map(t=>`<button type="button">${t}</button>`).join(''));

define('rf-toolbar',`:host{display:flex;align-items:center;height:28px;flex:none;background:#f7f7f7;border-top:1px solid #e4e4e4;overflow:hidden}
button{border:1px solid transparent;background:none;padding:0;display:grid;place-items:center;flex:none;height:24px}
.i{width:24px;margin:0 1px}.on{background:#cce8ff;border-color:#99d1ff;border-radius:2px}
.c{width:12px}.c.w{width:15px}.dim{opacity:.5}
.s{width:1px;height:18px;margin:0 3px;background:#8f8f8f;flex:none}
.g{width:2px;height:20px;margin:0 1px;flex:none;background:repeating-linear-gradient(#b5b5b5 0 2px,transparent 2px 4px)}`,
h=>h.getAttribute('items').split(' ').map(n=>n==='|'?'<span class="s"></span>':n===':'?'<span class="g"></span>':
 n[0]==='v'&&n.length<3?`<button type="button" class="c ${n==='vw'?'w':n==='vd'?'dim':''}" aria-label="Menü">${svg('caret',12)}</button>`:
 `<button type="button" class="i ${n[0]==='+'?'on':''}" aria-label="${n}">${svg(n.replace('+',''),18)}</button>`).join(''));

const T=[[-1,'','rfem','RFEM'],[0,'D','file','<b>Zweikammer Erdbehälter.rf6*</b>'],[1,'D','folder','Basisobjekte'],
[2,'R','mat','Materialien'],[2,'R','section','Querschnitte'],[2,'R','thick','Dicken'],[2,'R','node','Knoten'],[2,'R','line','Linien'],[2,'R','member','Stäbe'],[2,'R','memrep','Stabrepräsentanten'],[2,'R','surface','Flächen'],[2,'R','hole','Öffnungen'],[2,'','cube','Volumenkörper'],[2,'','lineset','Liniensätze'],[2,'R','memset','Stabsätze'],[2,'R','memsetrep','Stabsatzrepräsentanten'],[2,'','surfset','Flächensätze'],[2,'','cubeset','Volumensätze'],[1,'R','folder','Spezielle Objekte'],[1,'R','folder','Typen für Knoten']];
define('rf-navigator',`:host{display:flex;flex-direction:column;width:329px;flex:none;background:#f4f4f6}
header{display:flex;align-items:center;height:22px;background:#d8e5f2;padding:0 1px 0 6px;color:#3c3c3c;flex:none}
h2{font-size:12px;font-weight:600;margin:0;flex:1}b{font-weight:600}
header button{border:0;background:none;padding:0;width:21px;height:20px;display:grid;place-items:center}
.p{flex:1;display:flex;margin-top:1px;border:1px solid #c6c6d2;border-left-width:2px;background:#fff;min-height:0;overflow:hidden}
ul{list-style:none;margin:1px 0 0;padding:0;flex:1}
li{display:flex;align-items:center;height:18px;gap:3px}
.ch{width:20px;display:grid;place-items:center;margin-right:-1px}.ic{width:20px;display:grid;place-items:center;flex:none}
.bar{width:17px;background:#f0f0f0;display:flex;justify-content:center;padding-top:17px}.bar i{width:2px;background:#858585}`,
()=>`<header><h2>Navigator - Daten</h2><button type="button" aria-label="Andocken"><svg width="9" height="9" fill="none" stroke="#222"><path d="M.5 3.500h6v5h-6zM.5 4h6M2.500 3V.5h6v5h-2M2.500 1h6"/></svg></button><button type="button" aria-label="Schließen"><svg width="9" height="9"><path d="M1 1l7 7M8 1 1 8" stroke="#222" stroke-width="2"/></svg></button></header>
<div class="p"><ul>${T.map(([l,c,i,t])=>`<li style="padding-left:${l<0?2:l*20}px">${l<0?'':`<span class="ch">${c?svg('chev'+c,14):''}</span>`}<span class="ic">${svg(i,i==='rfem'||i==='folder'?16:i==='file'?18:15)}</span><span>${t}</span></li>`).join('')}</ul><div class="bar"><i></i></div></div>`);

define('rf-model-view',':host{display:block;flex:1;min-width:0;background:#fff;margin-left:4px;overflow:hidden}',
`<svg viewBox="84 180 864 1140" width="288" height="380" role="img" aria-label="Modell">
<defs><linearGradient id="b" x1="0" y1="0" x2="0" y2="1"><stop offset="0" stop-color="#567593"/><stop offset=".45" stop-color="#4a6782"/><stop offset=".7" stop-color="#455f75"/><stop offset="1" stop-color="#4c6c8a"/></linearGradient>
<radialGradient id="d" cx=".5" cy=".5" r=".5"><stop offset="0" stop-color="#3c4f5a" stop-opacity=".4"/><stop offset="1" stop-color="#3c4f5a" stop-opacity="0"/></radialGradient></defs>
<path d="M84 182h8M88 180v8" stroke="#888" stroke-width="2"/>
<path d="M948 532 720 498Q650 466 600 486 560 500 545 545 450 680 436 850 400 862 404 888 408 906 436 910 440 1080 520 1160 560 1190 640 1172L948 1212Z" fill="url(#b)"/>
<ellipse cx="620" cy="980" rx="110" ry="140" fill="url(#d)"/>
<ellipse cx="730" cy="860" rx="60" ry="90" fill="url(#d)"/>
<g fill="none" stroke="#6e716d" stroke-linecap="round">
<path d="M566 530Q590 484 660 482 700 482 722 502L952 534" stroke-width="34"/>
<path d="M556 540Q456 690 446 850" stroke-width="20" stroke="#7d8485"/>
<path d="M446 905Q455 1080 535 1150 570 1178 640 1164L952 1206" stroke-width="32"/>
<path d="M910 1212l50 22" stroke-width="20"/>
<path d="M436 850Q404 862 408 886 412 904 440 904Q424 880 436 856Q490 820 525 805 640 748 760 745 850 745 948 768" stroke-width="15"/>
<path d="M440 904 770 955 948 978" stroke-width="15"/>
<path d="M630 495Q545 490 519 740 495 1040 610 1160" stroke-width="26" stroke="#566066"/>
<path d="M640 500Q540 520 533 800 538 1080 620 1160" stroke-width="4" stroke="#28435f"/>
<path d="M480 700Q440 880 490 1080" stroke-width="12" stroke="#59656c" opacity=".7"/>
<path d="M735 500Q800 590 802 745 798 1070 640 1160" stroke-width="20" stroke="#606869"/>
<path d="M952 590Q840 710 836 950 836 1100 885 1192" stroke-width="22" stroke="#5f6769"/>
<path d="M930 620Q850 730 846 930" stroke-width="4" stroke="#868e91"/>
<path d="M545 820Q650 752 760 745L940 770M560 920 948 974" stroke-width="3" stroke="#565b5a"/>
<path d="M700 1168 948 1208M730 492 948 526" stroke-width="3" stroke="#7e817c"/></g>
<path d="M548 728 530 800 545 888M518 740 530 820" stroke="#27486c" stroke-width="4" fill="none"/>
<path d="M440 906 620 828" stroke="#7d95a8" stroke-width="3" stroke-dasharray="10 8"/>
<path d="M527 800V1285M624 840V1300" stroke="#8d9396" stroke-width="3" opacity=".7"/>
<text x="486" y="1322" font-size="36" font-style="italic" fill="#666" font-family="Open Sans">d<tspan font-size="26">e</tspan>=0.50</text></svg>`);

define('rf-app',`:host{display:block;height:100%;position:relative;overflow:hidden}
main{height:100%;display:flex;flex-direction:column}
.title{display:flex;align-items:center;gap:3px;height:25px;background:#f3f3f3;color:#8a8a8a;flex:none}
.title rf-icon{margin-left:1px}
.work{flex:1;display:flex;min-height:0;background:#f7f7f7}
.status{height:40px;flex:none;background:#bdbdc3}
.global{position:absolute;left:1px;right:1px;top:478px;bottom:3px}
.optim{position:absolute;left:619px;right:1px;top:0}
.grow{flex:1}.tools{display:flex;gap:3px;padding:15px 5px 5px}.tools .e{margin-left:auto}
.cm{display:grid;grid-template-columns:minmax(0,3fr) minmax(0,2fr);gap:10px;margin-top:10px;height:47px;flex:none}
.split{flex:1}.sw{width:21px;height:21px;border:1px solid #000;background:#cff;flex:none;padding:0}
.pair{display:flex;gap:3px}.okall{display:flex;position:relative;margin-right:7px}
.cursor{position:absolute;left:49px;top:-1px;filter:drop-shadow(2px 3px 2px rgba(0,0,0,.45));pointer-events:none}`,
`<main><div class="title"><rf-icon name="logo" size="20"></rf-icon><span>Dlubal RFEM | 6.11.0002 | Zweikammer Erdbehälter.rf6*</span></div>
<rf-menubar></rf-menubar>
<rf-toolbar style="padding-left:5px" items=": newmodel open cdoc cloud hand save print v report page | undo v redo vd | +nav +grid graph list2 console sc layers blocks head | : plane"></rf-toolbar>
<rf-toolbar style="padding-left:1px" items=": nstar vw lnew mnew v poly v | support msupport ssupport | rect v quad v opening v book v solid | gray vd | load1 load2 load3 load4 mem2 v"></rf-toolbar>
<div class="work"><rf-navigator></rf-navigator><rf-model-view></rf-model-view></div><div class="status"></div></main>
<rf-window class="global" caption="Globale Parameter bearbeiten">
<rf-panel class="grow" heading="Globale Parameter" style="min-height:0"><rf-global-table></rf-global-table>
<div class="tools"><rf-tool name="r1"></rf-tool><rf-tool name="r2"></rf-tool><rf-tool name="r3"></rf-tool><rf-tool name="r4"></rf-tool><rf-tool name="r5"></rf-tool><rf-tool class="e" name="xls1"></rf-tool><rf-tool name="xls2"></rf-tool></div></rf-panel>
<div class="cm"><rf-panel heading="Kommentar"><rf-comment></rf-comment></rf-panel><rf-panel></rf-panel></div>
<rf-tool slot="footer" name="help"></rf-tool><rf-tool slot="footer" name="units"></rf-tool><span slot="footer" class="split"></span>
<rf-button slot="footer" primary>OK</rf-button><rf-button slot="footer">Abbrechen</rf-button><rf-button slot="footer" disabled>Anwenden</rf-button>
</rf-window>
<rf-window class="optim" caption="Optimierungseinstellungen bearbeiten" controls><rf-optimizer></rf-optimizer>
<rf-tool slot="footer" name="help"></rf-tool><rf-tool slot="footer" name="units"></rf-tool>
<span slot="footer" class="pair"><button class="sw" type="button" aria-label="Farbe"></button><rf-tool name="disp"></rf-tool></span><rf-tool slot="footer" name="fx"></rf-tool><span slot="footer" class="split"></span>
<span slot="footer" class="okall"><rf-button wide>OK &amp; alle berechnen</rf-button><svg class="cursor" width="34" height="36"><circle cx="12" cy="12" r="10" fill="#0cab8b" stroke="#0a8a70"/><path d="M12 12v18l4-4 3 7 3.500-1.500-3-6.500h6z" fill="#000" stroke="#fff"/></svg></span>
<rf-button slot="footer" primary>OK</rf-button><rf-button slot="footer">Abbrechen</rf-button><rf-button slot="footer" disabled>Anwenden</rf-button>
</rf-window>`);
</script>
</body>
</html>
